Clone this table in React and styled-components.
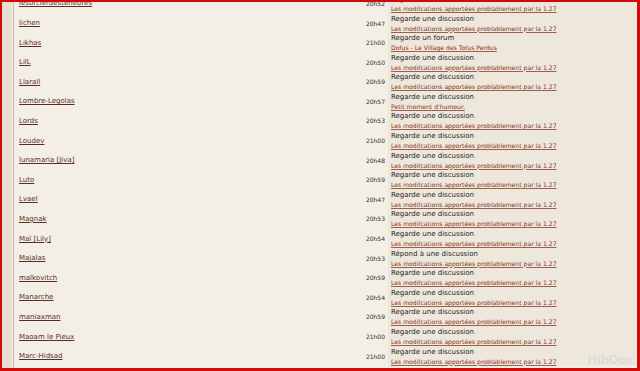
import React from "react";
import styled, { createGlobalStyle } from "styled-components";

const GlobalStyle = createGlobalStyle`
  html, body { margin: 0; padding: 0; background: #f3efe6; }
  body { width: 640px; height: 371px; overflow: hidden; }
`;

const LINK = "Les modifcations apportées problablement par la 1.27";

const rows = [
  { name: "lesorcierdestenebres", time: "20h52", action: "Regarde une discussion", link: LINK },
  { name: "lichen", time: "20h47", action: "Regarde une discussion", link: LINK },
  { name: "Likhas", time: "21h00", action: "Regarde un forum", link: "Dofus - Le Village des Tofus Perdus" },
  { name: "LilL", time: "20h50", action: "Regarde une discussion", link: LINK },
  { name: "Llarall", time: "20h59", action: "Regarde une discussion", link: LINK },
  { name: "Lombre-Legolas", time: "20h57", action: "Regarde une discussion", link: "Petit moment d'humour." },
  { name: "Lords", time: "20h53", action: "Regarde une discussion", link: LINK },
  { name: "Loudev", time: "21h00", action: "Regarde une discussion", link: LINK },
  { name: "lunamaria [Jiva]", time: "20h48", action: "Regarde une discussion", link: LINK },
  { name: "Luto", time: "20h59", action: "Regarde une discussion", link: LINK },
  { name: "Lvael", time: "20h47", action: "Regarde une discussion", link: LINK },
  { name: "Magnak", time: "20h53", action: "Regarde une discussion", link: LINK },
  { name: "Maï [Lily]", time: "20h54", action: "Regarde une discussion", link: LINK },
  { name: "Majalas", time: "20h53", action: "Répond à une discussion", link: LINK },
  { name: "malkovitch", time: "20h59", action: "Regarde une discussion", link: LINK },
  { name: "Manarche", time: "20h54", action: "Regarde une discussion", link: LINK },
  { name: "maniaxman", time: "20h59", action: "Regarde une discussion", link: LINK },
  { name: "Maoam le Pieux", time: "21h00", action: "Regarde une discussion", link: LINK },
  { name: "Marc-Hidsad", time: "21h00", action: "Regarde une discussion", link: LINK },
];

const Frame = styled.div`
  position: relative;
  box-sizing: border-box;
  width: 640px;
  height: 371px;
  border-style: solid;
  border-color: #d20a0a;
  border-width: 2px 3px 3px 2px;
  display: flex;
  overflow: hidden;
  background: #f3efe6;
  font-family: "DejaVu Sans", Verdana, sans-serif;
`;

const Strip = styled.div`
  flex: 0 0 9px;
  background: #e6dfd2;
  border-right: 2px solid #ede7dc;
`;

const Rule = styled.div`
  flex: 0 0 1px;
  background: #c6bdad;
`;

const Table = styled.div`
  flex: 1;
  display: flex;
  flex-direction: column;
  margin-top: -8.4px;
`;

const Row = styled.div`
  display: grid;
  grid-template-columns: 1fr 60px 249px;
  height: 19.6px;
`;

const Name = styled.a`
  align-self: center;
  padding-left: 5px;
  font-size: 7px;
  color: #5a2e24;
  text-decoration: underline;
  text-decoration-thickness: 1px;
  white-space: nowrap;
`;

const Time = styled.div`
  align-self: center;
  text-align: right;
  padding-right: 3px;
  font-size: 6px;
  color: #2e2e2e;
`;

const Action = styled.div`
  background: #eee8dc;
  display: flex;
  flex-direction: column;
  justify-content: center;
  padding: 1px 0 0 3px;
  white-space: nowrap;
`;

const Verb = styled.span`
  font-size: 7px;
  line-height: 9px;
  color: #1e1e1e;
`;

const Topic = styled.a`
  font-size: 6.1px;
  line-height: 9px;
  color: #84301a;
  text-decoration: underline;
  text-decoration-thickness: 1px;
  text-decoration-color: rgba(132, 48, 26, 0.75);
`;

const Watermark = styled.span`
  position: absolute;
  right: 4px;
  bottom: 1px;
  font-family: "DejaVu Sans", sans-serif;
  font-size: 12px;
  font-weight: bold;
  color: rgba(205, 205, 210, 0.5);
  letter-spacing: -0.5px;
`;

export default function App() {
  return (
    <>
      <GlobalStyle />
      <Frame>
        <Strip />
        <Rule />
        <Table>
          {rows.map((r) => (
            <Row key={r.name}>
              <Name>{r.name}</Name>
              <Time>{r.time}</Time>
              <Action>
                <Verb>{r.action}</Verb>
                <Topic>{r.link}</Topic>
              </Action>
            </Row>
          ))}
        </Table>
        <Watermark>HibOox</Watermark>
      </Frame>
    </>
  );
}
